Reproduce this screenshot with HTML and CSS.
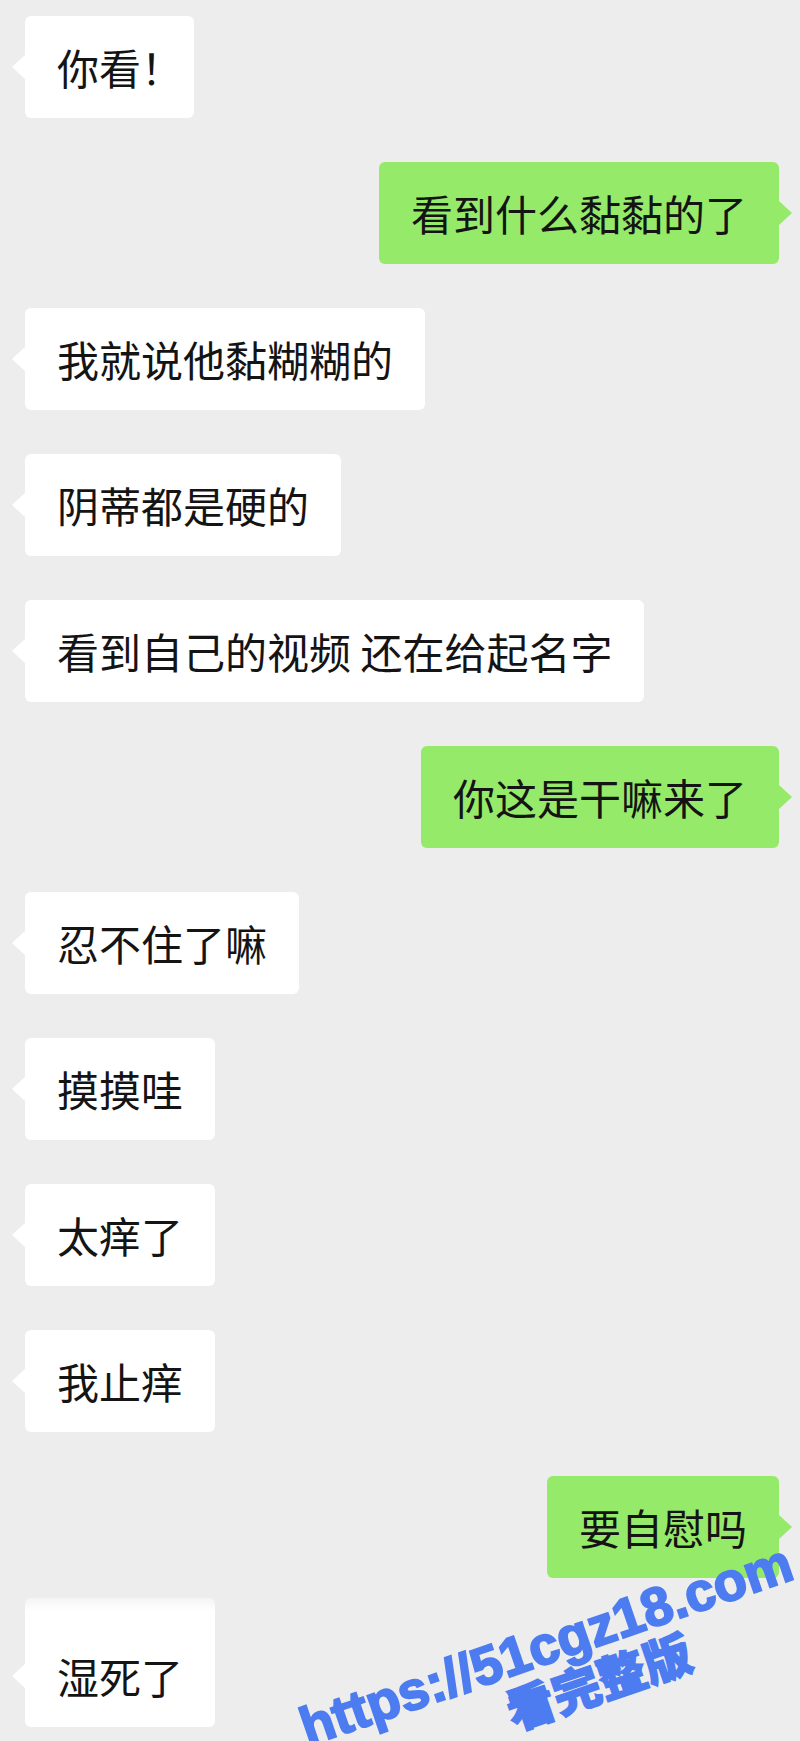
FILE: index.html
```html
<!DOCTYPE html>
<html>
<head>
    <meta charset="utf-8">
    <link rel="stylesheet" href="styles.css">
</head>
<body>
    <div id="chat">
        <div class="row"><div class="bubble">你看！</div></div>
        <div class="row mine"><div class="bubble">看到什么黏黏的了</div></div>
        <div class="row"><div class="bubble">我就说他黏糊糊的</div></div>
        <div class="row"><div class="bubble">阴蒂都是硬的</div></div>
        <div class="row"><div class="bubble">看到自己的视频 还在给起名字</div></div>
        <div class="row mine"><div class="bubble">你这是干嘛来了</div></div>
        <div class="row"><div class="bubble">忍不住了嘛</div></div>
        <div class="row"><div class="bubble">摸摸哇</div></div>
        <div class="row"><div class="bubble">太痒了</div></div>
        <div class="row"><div class="bubble">我止痒</div></div>
        <div class="row mine"><div class="bubble">要自慰吗</div></div>
        <div class="row cut"><div class="bubble">湿死了</div></div>

        <!-- watermark stamped over the screenshot -->
        <div class="watermark">
            <div class="wm-url">https://51cgz18.com</div>
            <div class="wm-tag">看完整版</div>
        </div>
    </div>
</body>
</html>
```

FILE: styles.css
```css
:root {
    --chat-bg: #ededed;
    --bubble-white: #ffffff;
    --bubble-green: #95ea69;
    --text: #141414;
    --mark-blue: #4c7cf0;
}

body {
    margin: 0;
    padding: 0;
    background: var(--chat-bg);
    font-family: "Noto Sans CJK SC", "Noto Sans", sans-serif;
}

#chat {
    position: relative;
    height: 1741px;
    overflow: hidden;
    box-sizing: border-box;
    padding: 16px 21px 0 25px;
    display: flex;
    flex-direction: column;
    gap: 44px;
}

.row {
    display: flex;
}

.row.mine {
    justify-content: flex-end;
}

.bubble {
    position: relative;
    background: var(--bubble-white);
    color: var(--text);
    font-size: 42px;
    line-height: 58px;
    padding: 22px 32px;
    border-radius: 6px;
    white-space: nowrap;
    font-feature-settings: "halt";
}

/* little arrow pointing at the sender */
.bubble::before {
    content: "";
    position: absolute;
    bottom: 39px;
    left: -13px;
    border-top: 12px solid transparent;
    border-bottom: 12px solid transparent;
    border-right: 13px solid var(--bubble-white);
}

.mine .bubble {
    background: var(--bubble-green);
}

.mine .bubble::before {
    left: auto;
    right: -13px;
    border-right: 0;
    border-left: 13px solid var(--bubble-green);
}

/* last bubble was stitched in, its top is taller and faded */
.row.cut {
    margin-top: -24px;
}

.cut .bubble {
    padding-top: 49px;
    background: linear-gradient(#f4f4f4 0, #fbfbfb 8px, #ffffff 14px);
}

.watermark {
    position: absolute;
    left: 289px;
    top: 1618px;
    width: 530px;
    height: 100px;
    transform: rotate(-19deg);
    color: var(--mark-blue);
    text-align: center;
    white-space: nowrap;
    pointer-events: none;
}

.wm-url {
    font-family: "Liberation Sans", Arial, sans-serif;
    font-weight: 700;
    font-size: 54px;
    line-height: 50px;
    -webkit-text-stroke: 2px var(--mark-blue);
}

.wm-tag {
    font-family: "Noto Sans CJK SC", sans-serif;
    font-weight: 900;
    font-size: 48px;
    line-height: 50px;
    padding-left: 76px;
    -webkit-text-stroke: 1.5px var(--mark-blue);
}
```
